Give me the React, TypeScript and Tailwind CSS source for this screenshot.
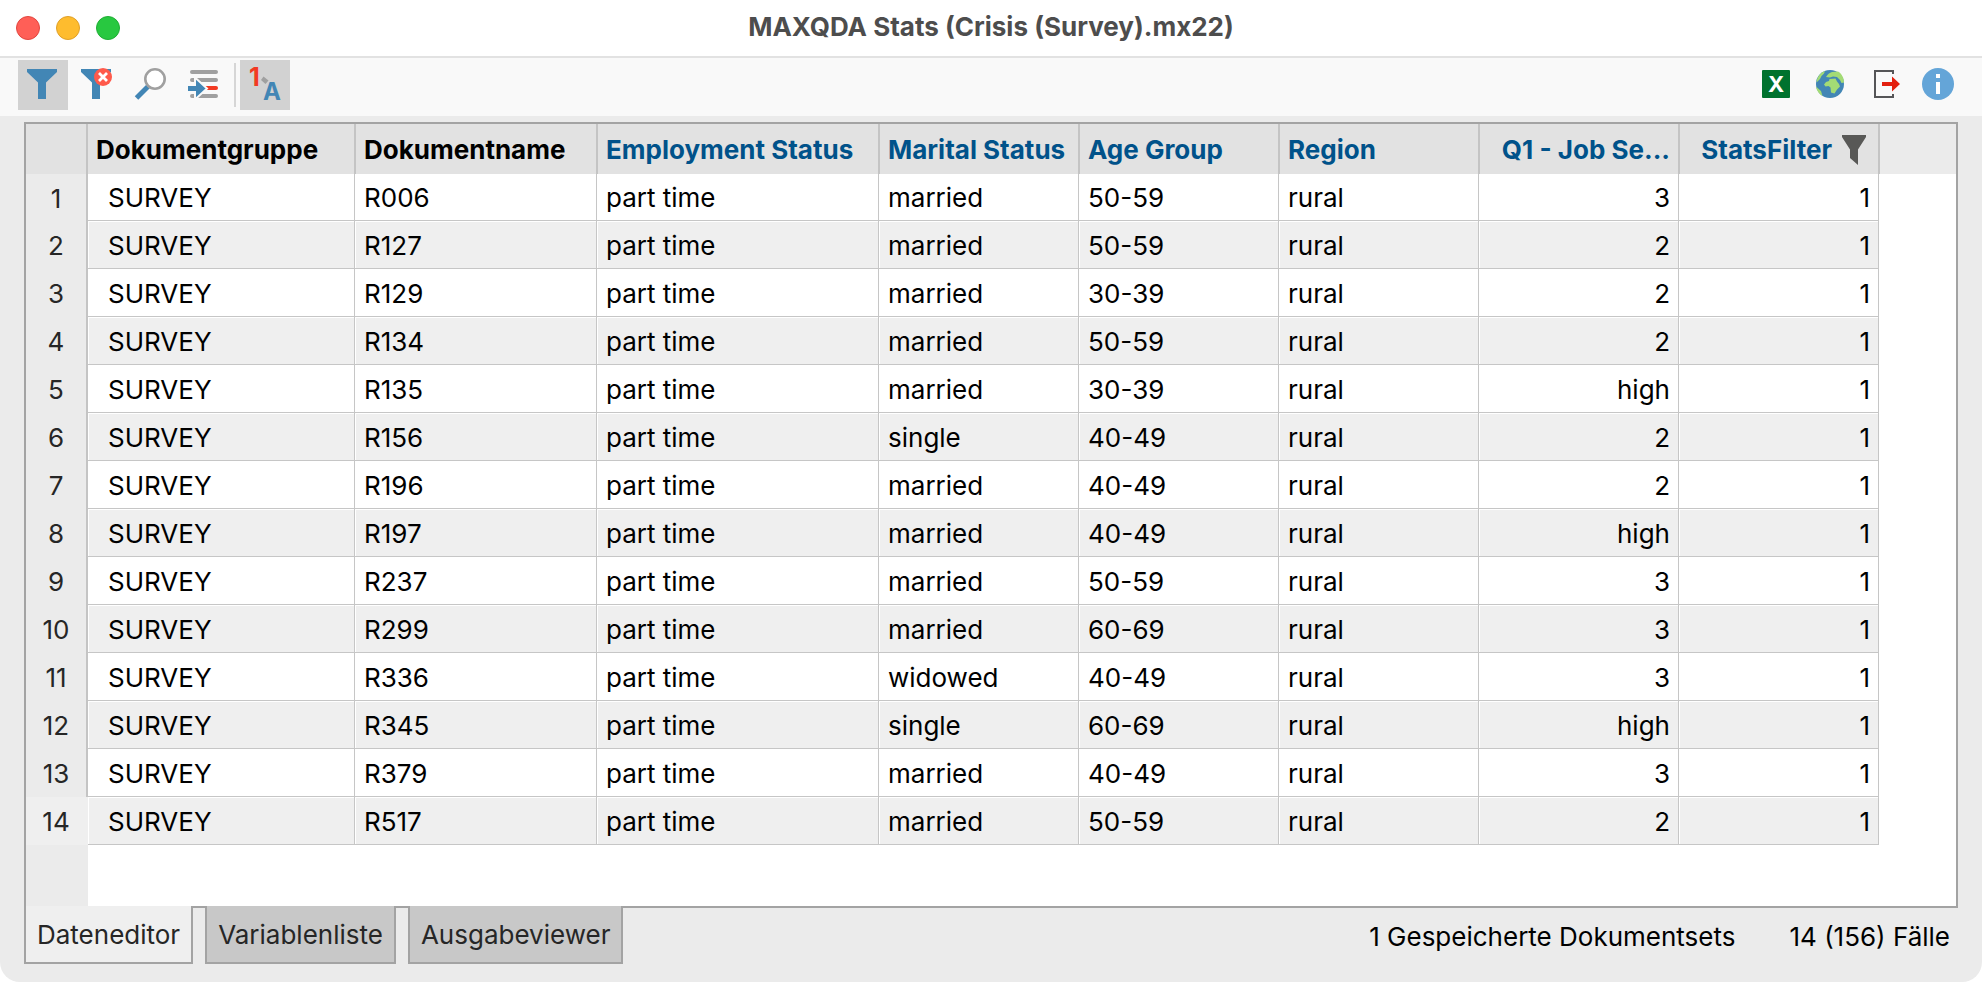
import clsx from "clsx";
import type { ReactNode } from "react";

type Case = {
  name: string;
  marital: string;
  age: string;
  q1: string;
};

const cases: Case[] = [
  { name: "R006", marital: "married", age: "50-59", q1: "3" },
  { name: "R127", marital: "married", age: "50-59", q1: "2" },
  { name: "R129", marital: "married", age: "30-39", q1: "2" },
  { name: "R134", marital: "married", age: "50-59", q1: "2" },
  { name: "R135", marital: "married", age: "30-39", q1: "high" },
  { name: "R156", marital: "single", age: "40-49", q1: "2" },
  { name: "R196", marital: "married", age: "40-49", q1: "2" },
  { name: "R197", marital: "married", age: "40-49", q1: "high" },
  { name: "R237", marital: "married", age: "50-59", q1: "3" },
  { name: "R299", marital: "married", age: "60-69", q1: "3" },
  { name: "R336", marital: "widowed", age: "40-49", q1: "3" },
  { name: "R345", marital: "single", age: "60-69", q1: "high" },
  { name: "R379", marital: "married", age: "40-49", q1: "3" },
  { name: "R517", marital: "married", age: "50-59", q1: "2" },
];

type ToolButtonProps = {
  label: string;
  active?: boolean;
  children: ReactNode;
};

function ToolButton({ label, active, children }: ToolButtonProps) {
  return (
    <button
      type="button"
      aria-label={label}
      title={label}
      className={clsx("size-[50px] shrink-0", active && "bg-[#d2d2d2]")}
    >
      <svg viewBox="0 0 50 50" className="size-full">
        {children}
      </svg>
    </button>
  );
}

function Funnel() {
  return <path d="M9 9h30v3L28 22.500V39h-8V22.500L9 12z" fill="#4286b5" />;
}

function Toolbar() {
  return (
    <div className="flex h-[60px] shrink-0 items-start justify-between border-t-2 border-[#e2e2e2] bg-[#f9f9f9] pt-0.5 pr-[19px] pl-[18px]">
      <div className="flex items-center gap-1">
        <ToolButton label="Filter" active>
          <Funnel />
        </ToolButton>
        <ToolButton label="Filter zurücksetzen">
          <Funnel />
          <circle cx="31" cy="17" r="9" fill="#ff5a4b" />
          <path d="M27 13l8 8M35 13l-8 8" stroke="#fff" strokeWidth="2.800" />
        </ToolButton>
        <ToolButton label="Suchen">
          <path d="M22 26.500L10.500 38" stroke="#4286b5" strokeWidth="5" />
          <circle cx="29" cy="19" r="9.700" fill="#fff" stroke="#a0a0a0" strokeWidth="2.600" />
        </ToolButton>
        <ToolButton label="Gehe zu">
          <path
            d="M12 12h24M12 20h24M12 28h6M12 36h24"
            stroke="#a0a0a0"
            strokeWidth="4"
            strokeLinecap="round"
          />
          <path d="M24 28h12" stroke="#f23a22" strokeWidth="4" strokeLinecap="round" />
          <path
            d="M7 25h8v-7.500L27 28.500 15 39.500V32H7z"
            fill="#4286b5"
            stroke="#f9f9f9"
            strokeWidth="2"
          />
        </ToolButton>
        <div className="h-11 w-0.5 bg-[#d6d6d6]" />
        <ToolButton label="Werte oder Labels" active>
          <text x="9" y="26" fill="#f23a22" className="text-[25px] font-bold">
            1
          </text>
          <path d="M23.500 16.500l5 4-3 3.500-4.500-4z" fill="#a0a0a0" />
          <text x="23" y="40" fill="#4286b5" className="text-[24px] font-bold">
            A
          </text>
        </ToolButton>
      </div>
      <div className="flex items-center gap-1">
        <ToolButton label="Excel">
          <rect x="11" y="10" width="28" height="28" rx="1" fill="#00722e" />
          <text x="25" y="32" textAnchor="middle" fill="#fff" className="text-[22px] font-bold">
            X
          </text>
        </ToolButton>
        <ToolButton label="HTML">
          <circle cx="25" cy="24" r="14" fill="#4286b5" />
          <path
            d="M11.500 21.500c1-5 4-9 8.500-10.500L19 13.500 16.500 16l-1.500 3-3 3z M21 17c1.500-2.500 3.500-4.500 6-5l6-.500c3.500 2 6 6 6 11l-2.500.500-1.500-3-3-3-4-.500-3 1z M19 24.500l2-2.500 3-1 .500-2 6-.500 1.500 3 2 2.500 1 2.500-3 3-2.500 4-3.500-1-.500-5-2-1.500-3 .500z M11 26.500l5 4.500 1.500 5c-3.500-2-6-5.500-6.500-9.500z"
            fill="#a3db75"
          />
        </ToolButton>
        <ToolButton label="Exportieren">
          <path d="M34 14v-3H16v26h18v-3" fill="none" stroke="#555557" strokeWidth="2" />
          <path d="M23 22h10v-5.500l8 7.500-8 7.500V26H23z" fill="#e3200f" />
        </ToolButton>
        <ToolButton label="Info">
          <circle cx="25" cy="24" r="16" fill="#64a5d8" />
          <path d="M23 14h4v4h-4zM23 22h4v12h-4z" fill="#fff" />
        </ToolButton>
      </div>
    </div>
  );
}

type HeadCellProps = {
  variable?: boolean;
  first?: boolean;
  right?: boolean;
  children: ReactNode;
};

function HeadCell({ variable, first, right, children }: HeadCellProps) {
  return (
    <th
      scope="col"
      className={clsx(
        "truncate border-r border-[#c4c4c4] bg-[#e2e2e2] pt-0.5 pl-2 font-bold",
        !first && "border-l",
        variable ? "text-[#00528a]" : "text-black",
        right ? "pr-2 text-right" : "text-left"
      )}
    >
      {children}
    </th>
  );
}

type CellProps = {
  shaded: boolean;
  right?: boolean;
  indent?: boolean;
  children: ReactNode;
};

function Cell({ shaded, right, indent, children }: CellProps) {
  return (
    <td
      className={clsx(
        "truncate border-r border-b border-[#c6c6c6] pt-0.5 shadow-[inset_1px_1px_0_#fff]",
        shaded ? "bg-[#efefef]" : "bg-white",
        right ? "pr-2 text-right" : indent ? "pl-5" : "pl-[9px]"
      )}
    >
      {children}
    </td>
  );
}

function DataTable() {
  return (
    <table className="w-full table-fixed border-separate border-spacing-0 text-[26px] leading-8">
      <colgroup>
        <col className="w-[62px]" />
        <col className="w-[267px]" />
        <col className="w-[242px]" />
        <col className="w-[282px]" />
        <col className="w-[200px]" />
        <col className="w-[200px]" />
        <col className="w-[200px]" />
        <col className="w-[200px]" />
        <col className="w-[200px]" />
        <col />
      </colgroup>
      <thead>
        <tr className="h-[50px]">
          <td className="border-r-2 border-[#c4c4c4] bg-[#e2e2e2]" />
          <HeadCell first>Dokumentgruppe</HeadCell>
          <HeadCell>Dokumentname</HeadCell>
          <HeadCell variable>Employment Status</HeadCell>
          <HeadCell variable>Marital Status</HeadCell>
          <HeadCell variable>Age Group</HeadCell>
          <HeadCell variable>Region</HeadCell>
          <HeadCell variable right>
            Q1 - Job Se...
          </HeadCell>
          <HeadCell variable right>
            <span className="flex items-center justify-end gap-2.5 pr-1">
              StatsFilter
              <svg viewBox="0 0 24 30" className="h-[30px] w-6" aria-hidden="true">
                <path d="M0 0h24v2l-8 12.500V30l-8-7v-8.500L0 2z" fill="#585856" />
              </svg>
            </span>
          </HeadCell>
          <td className="border-l border-[#c4c4c4] bg-[#ebebeb]" />
        </tr>
      </thead>
      <tbody>
        {cases.map((item, i) => {
          const shaded = i % 2 === 1;
          const last = i === cases.length - 1;
          return (
            <tr key={item.name} className={i === 0 ? "h-[47px]" : "h-12"}>
              <th
                scope="row"
                className={clsx(
                  "border-r-2 pt-0.5 text-center font-normal text-[#262626]",
                  last ? "border-[#efefef] bg-[#efefef]" : "border-[#c4c4c4] bg-[#ebebeb]"
                )}
              >
                {i + 1}
              </th>
              <Cell shaded={shaded} indent>
                SURVEY
              </Cell>
              <Cell shaded={shaded}>{item.name}</Cell>
              <Cell shaded={shaded}>part time</Cell>
              <Cell shaded={shaded}>{item.marital}</Cell>
              <Cell shaded={shaded}>{item.age}</Cell>
              <Cell shaded={shaded}>rural</Cell>
              <Cell shaded={shaded} right>
                {item.q1}
              </Cell>
              <Cell shaded={shaded} right>
                1
              </Cell>
              <td />
            </tr>
          );
        })}
      </tbody>
    </table>
  );
}

function Tab({ active, children }: { active?: boolean; children: ReactNode }) {
  return (
    <button
      type="button"
      role="tab"
      aria-selected={!!active}
      className={clsx(
        "h-[58px] border-x-2 border-b-2 border-[#a3a3a3] px-[11px] pt-0.5 text-[#262626]",
        active ? "bg-[#efefef]" : "bg-[#c8c8c8]"
      )}
    >
      {children}
    </button>
  );
}

export default function App() {
  return (
    <div className="bg-white font-['Inter','Liberation_Sans',sans-serif] text-black">
      <div className="flex min-h-screen flex-col overflow-hidden rounded-b-[20px] bg-[#ebebeb]">
        <header className="grid h-14 shrink-0 grid-cols-[1fr_auto_1fr] items-center bg-white px-4">
          <div className="flex gap-4">
            <button
              type="button"
              aria-label="Schließen"
              className="size-6 rounded-full border border-[#e2463f] bg-[#ff5f57]"
            />
            <button
              type="button"
              aria-label="Minimieren"
              className="size-6 rounded-full border border-[#e0a028] bg-[#febc2e]"
            />
            <button
              type="button"
              aria-label="Vergrößern"
              className="size-6 rounded-full border border-[#1fae34] bg-[#28c840]"
            />
          </div>
          <h1 className="pb-0.5 text-[26px] leading-8 font-bold text-[#4d4d4d]">
            MAXQDA Stats (Crisis (Survey).mx22)
          </h1>
        </header>
        <Toolbar />
        <main className="flex grow flex-col px-6 pt-1.5 pb-[18px]">
          <div className="flex grow flex-col border-2 border-[#a3a3a3] bg-white">
            <DataTable />
            <div className="w-[62px] grow bg-[#ebebeb]" />
          </div>
          <div className="-mt-0.5 flex shrink-0 items-center justify-between text-[26px] leading-8">
            <div role="tablist" className="relative flex gap-3">
              <Tab active>Dateneditor</Tab>
              <Tab>Variablenliste</Tab>
              <Tab>Ausgabeviewer</Tab>
            </div>
            <div className="flex gap-[54px] pt-1 pr-2">
              <span>1 Gespeicherte Dokumentsets</span>
              <span>14 (156) Fälle</span>
            </div>
          </div>
        </main>
      </div>
    </div>
  );
}
